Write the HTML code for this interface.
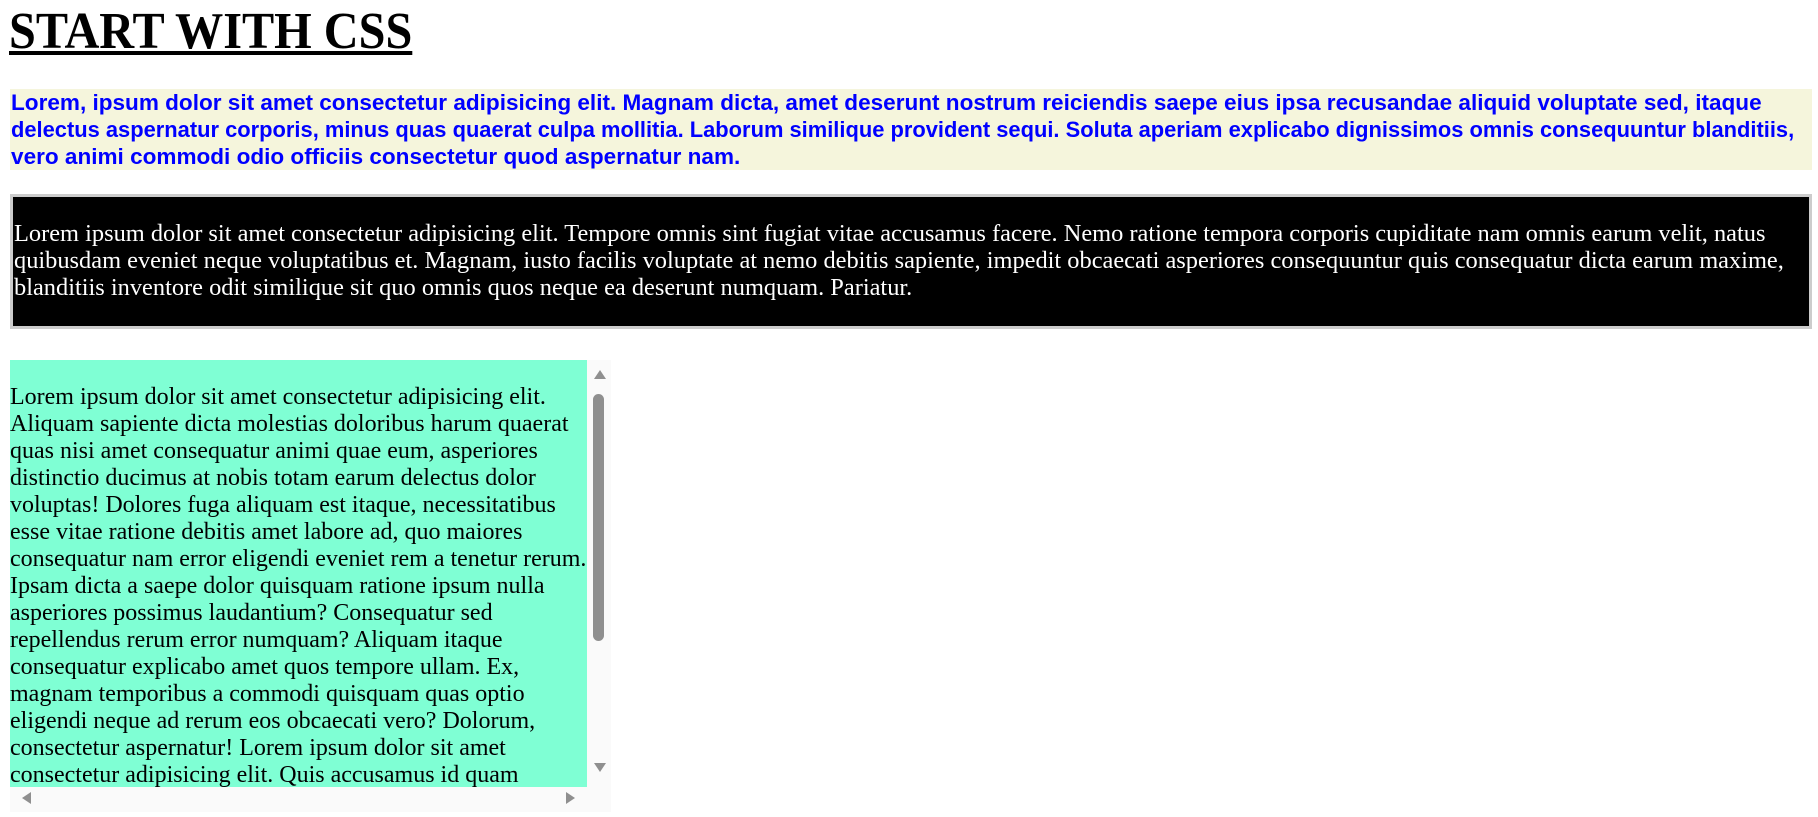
<!DOCTYPE html>
<html><head><meta charset="utf-8"><style>
body{margin:0;background:#fff;width:1818px;height:817px;overflow:hidden;position:relative;font-family:"Liberation Serif",serif}
h1{position:absolute;left:9px;top:2px;margin:0;font-size:52px;font-weight:bold;line-height:60px;text-decoration:underline;text-decoration-thickness:4px;text-underline-offset:3px;transform:scaleX(0.928);transform-origin:0 0;white-space:nowrap}
.blue{position:absolute;left:10px;top:89px;width:1802px;height:81px;background:#f5f5dc;color:#0000ff;font-family:"Liberation Sans",sans-serif;font-weight:bold;font-size:22px;line-height:27px;white-space:nowrap;overflow:hidden}
.blue div{transform-origin:0 0;padding-left:1px;height:27px}
.black{position:absolute;left:10px;top:194px;width:1796px;height:129px;background:#000;border:3px solid #ccc;color:#fff;font-size:24.4px;line-height:27px;white-space:nowrap}
.black div{padding:23px 0 0 1px}
.scroll{position:absolute;left:10px;top:360px;width:601px;height:452px;background:#fafafa}
.green{position:absolute;left:0;top:0;width:577px;height:427px;background:#7fffd4;overflow:hidden;font-size:24px;line-height:27px;white-space:nowrap;color:#000}
.green div{padding-top:24px}
.thumb{position:absolute;left:583px;top:34px;width:11px;height:247px;background:#8f8f8f;border-radius:6px}
.tri{position:absolute;width:0;height:0}
</style></head><body>
<h1>START WITH CSS</h1>
<div class="blue"><div style="transform:scaleX(1.025)">Lorem, ipsum dolor sit amet consectetur adipisicing elit. Magnam dicta, amet deserunt nostrum reiciendis saepe eius ipsa recusandae aliquid voluptate sed, itaque</div><div style="transform:scaleX(0.995)">delectus aspernatur corporis, minus quas quaerat culpa mollitia. Laborum similique provident sequi. Soluta aperiam explicabo dignissimos omnis consequuntur blanditiis,</div><div style="transform:scaleX(1.025)">vero animi commodi odio officiis consectetur quod aspernatur nam.</div></div>
<div class="black"><div>Lorem ipsum dolor sit amet consectetur adipisicing elit. Tempore omnis sint fugiat vitae accusamus facere. Nemo ratione tempora corporis cupiditate nam omnis earum velit, natus<br>quibusdam eveniet neque voluptatibus et. Magnam, iusto facilis voluptate at nemo debitis sapiente, impedit obcaecati asperiores consequuntur quis consequatur dicta earum maxime,<br>blanditiis inventore odit similique sit quo omnis quos neque ea deserunt numquam. Pariatur.</div></div>
<div class="scroll">
<div class="green"><div>Lorem ipsum dolor sit amet consectetur adipisicing elit.<br>Aliquam sapiente dicta molestias doloribus harum quaerat<br>quas nisi amet consequatur animi quae eum, asperiores<br>distinctio ducimus at nobis totam earum delectus dolor<br>voluptas! Dolores fuga aliquam est itaque, necessitatibus<br>esse vitae ratione debitis amet labore ad, quo maiores<br>consequatur nam error eligendi eveniet rem a tenetur rerum.<br>Ipsam dicta a saepe dolor quisquam ratione ipsum nulla<br>asperiores possimus laudantium? Consequatur sed<br>repellendus rerum error numquam? Aliquam itaque<br>consequatur explicabo amet quos tempore ullam. Ex,<br>magnam temporibus a commodi quisquam quas optio<br>eligendi neque ad rerum eos obcaecati vero? Dolorum,<br>consectetur aspernatur! Lorem ipsum dolor sit amet<br>consectetur adipisicing elit. Quis accusamus id quam</div></div>
<div class="thumb"></div>
<div class="tri" style="left:584px;top:10px;border-left:6px solid transparent;border-right:6px solid transparent;border-bottom:9px solid #8f8f8f"></div>
<div class="tri" style="left:584px;top:403px;border-left:6px solid transparent;border-right:6px solid transparent;border-top:9px solid #8f8f8f"></div>
<div class="tri" style="left:12px;top:432px;border-top:6px solid transparent;border-bottom:6px solid transparent;border-right:9px solid #8f8f8f"></div>
<div class="tri" style="left:556px;top:432px;border-top:6px solid transparent;border-bottom:6px solid transparent;border-left:9px solid #8f8f8f"></div>
</div>
</body></html>
